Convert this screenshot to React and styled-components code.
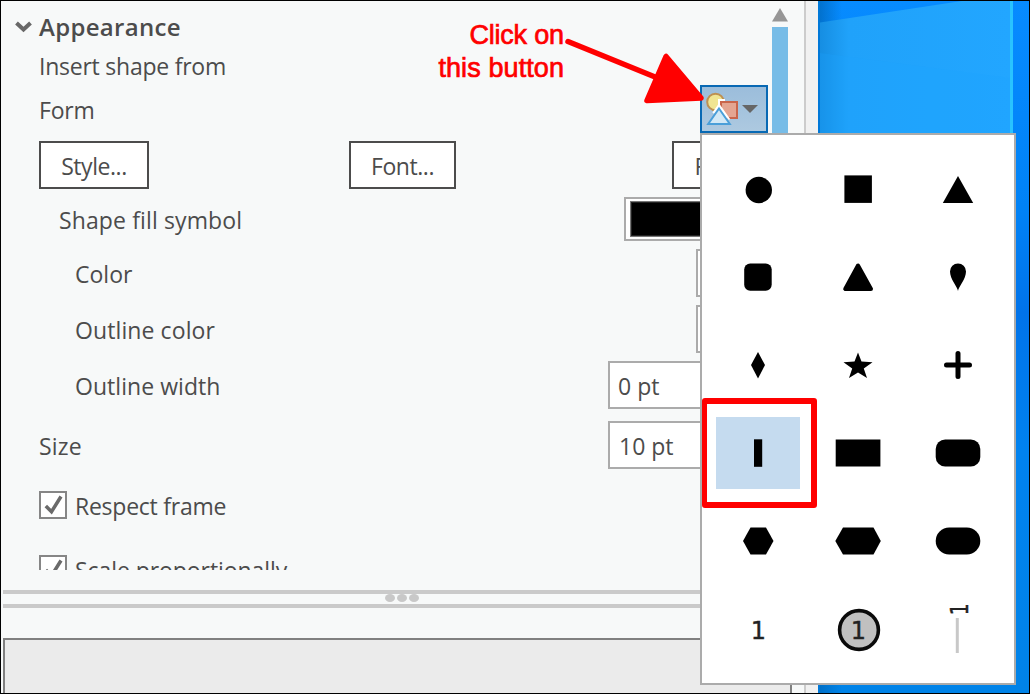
import React from "react";
import styled, { createGlobalStyle } from "styled-components";

const Global = createGlobalStyle`
  * { box-sizing: border-box; }
  body { margin: 0; overflow: hidden; }
`;

const Frame = styled.div`
  position: relative;
  display: flex;
  width: 1030px;
  height: 694px;
  border: 1px solid #000;
  overflow: hidden;
  background: #f7f9f9;
  color: #4c4c4c;
  font-family: "Open Sans", "Noto Sans", sans-serif;
  font-size: 23px;
`;

const Pane = styled.div`
  display: flex;
  flex-direction: column;
  width: 803px;
  height: 100%;
`;

const ScrollArea = styled.div`
  display: flex;
  height: 569px;
  overflow: hidden;
`;

const Properties = styled.div`
  width: 767px;
  padding-left: 38px;
`;

const Heading = styled.div`
  display: flex;
  align-items: center;
  height: 52px;
  margin-left: -24px;
  font-size: 24px;
  svg { margin-right: 7px; }
`;

const Row = styled.div`
  display: flex;
  align-items: center;
  height: ${(p) => p.$h}px;
  padding-left: ${(p) => p.$indent || 0}px;
  margin-bottom: ${(p) => p.$gap || 0}px;
`;

const Label = styled.span`
  display: block;
  flex: 1;
  line-height: 32px;
  padding-top: ${(p) => (p.$high || p.$bold ? 0 : 2)}px;
  padding-bottom: ${(p) => (p.$high ? 2 : 0)}px;
  white-space: nowrap;
  font-weight: ${(p) => (p.$bold ? 600 : 400)};
  letter-spacing: ${(p) => p.$track || 0}px;
`;

const ButtonRow = styled.div`
  display: flex;
  height: 48px;
  margin-bottom: 8px;
`;

const Button = styled.button`
  flex: none;
  width: ${(p) => p.$w}px;
  height: 48px;
  margin-right: ${(p) => p.$after || 0}px;
  padding: 2px 0 0;
  border: 2px solid #4c4c4c;
  background: #fff;
  color: inherit;
  font: inherit;
  letter-spacing: -0.45px;
`;

const Field = styled.div`
  display: flex;
  align-items: center;
  flex: none;
  width: ${(p) => p.$w}px;
  height: ${(p) => p.$h || 48}px;
  padding: ${(p) => p.$pad || "1px 8px 0"};
  border: 2px solid #ababab;
  background: #fff;
`;

const Swatch = styled.div`
  width: 100%;
  height: 100%;
  background: #000;
  border: 1px solid #777;
  box-shadow: inset 0 0 0 1px #222;
`;

const Check = styled.div`
  width: 28px;
  height: 28px;
  margin-right: 8px;
  border: 2px solid #868686;
  background: #fff;
  svg { display: block; }
`;

const Scrollbar = styled.div`
  display: flex;
  flex-direction: column;
  align-items: flex-start;
  width: 24px;
  padding: 7px 0 0 4px;
  svg { flex: none; }
`;

const Thumb = styled.div`
  width: 16px;
  height: 320px;
  margin: 5px 0 0;
  background: #77bce7;
`;

const Splitter = styled.div`
  display: flex;
  justify-content: center;
  align-items: flex-start;
  gap: 2px;
  height: 18px;
  margin: 20px 2px 0;
  padding-right: 2px;
  border-top: 4px solid #cacaca;
  border-bottom: 4px solid #cacaca;
`;

const Dot = styled.i`
  width: 10px;
  height: 8px;
  border-radius: 50%;
  background: #c8c8c8;
`;

const Preview = styled.div`
  flex: 1;
  width: 789px;
  margin: 30px 0 0 2px;
  border: 2px solid #808080;
  border-bottom: 0;
  background: #ebebeb;
`;

const Edge = styled.div`
  width: 14px;
  border-left: 2px solid #ccc;
  background: #f1f1f1;
`;

const Desktop = styled.div`
  flex: 1;
  background: #0080ed;
  svg { display: block; }
`;

const Gallery = styled.div`
  position: absolute;
  left: 699px;
  top: 132px;
  display: grid;
  grid-template-columns: repeat(3, 100px);
  grid-auto-rows: 88px;
  width: 316px;
  height: 552px;
  padding: 10px 6px;
  border: 2px solid #ababab;
  background: #fff;
`;

const Cell = styled.div`
  display: flex;
  align-items: center;
  justify-content: center;
  width: 84px;
  height: 72px;
  margin: 8px;
  background: ${(p) => (p.$selected ? "#c5dbef" : "transparent")};
`;

const ShapeButton = styled.button`
  position: absolute;
  left: 699px;
  top: 84px;
  width: 68px;
  height: 48px;
  padding: 0;
  border: 2px solid #0869b4;
  background: linear-gradient(#9bbddb, #adc9e0);
  svg { display: block; }
`;

const Marker = styled.div`
  position: absolute;
  left: 701px;
  top: 397px;
  width: 115px;
  height: 110px;
  border: 6px solid #f00;
  border-left-width: 5px;
  border-radius: 3px;
`;

const Note = styled.div`
  position: absolute;
  left: 400px;
  top: 18px;
  width: 163px;
  color: #f00;
  font: 27px/33px "Liberation Sans", Arial, sans-serif;
  text-align: right;
  -webkit-text-stroke: 0.7px #f00;
`;

const NoteLine = styled.div`
  margin-right: ${(p) => -(p.$track || 0)}px;
  letter-spacing: ${(p) => p.$track || 0}px;
`;

const Arrow = styled.svg`
  position: absolute;
  left: 559px;
  top: 29px;
`;

const CheckBox = () => (
  <Check>
    <svg width="24" height="24" viewBox="0 0 24 24">
      <path d="M4.8 13 10.5 18.700 20 3.5" fill="none" stroke="#6a6a6a" strokeWidth="3.5" />
    </svg>
  </Check>
);

const shapes = [
  <circle cx="24.8" cy="25" r="13.2" />,
  <rect x="10.4" y="10.4" width="27.5" height="27.5" />,
  <path d="M24 11 39.2 38H8.8z" />,
  <rect x="10.2" y="10.5" width="27.5" height="27.3" rx="6" />,
  <path d="M24 12.5 11.2 36H37z" stroke="#000" strokeWidth="4" strokeLinejoin="round" />,
  <path d="M24 38C23.500 34 16 26 16 18.500a8 8 0 0 1 16 0C32 26 24.500 34 24 38z" />,
  <path d="M24 11 31 24 24 37.500 17 24z" />,
  <path d="M24 11.500 27.500 20.500 38.500 21.200 29.800 27.500 33 37 24 31.500 15 37 18.200 27.500 9.500 21.200 20.500 20.500z" />,
  <path d="M24 12.500V35.500M12.500 24H35.500" stroke="#000" strokeWidth="5" strokeLinecap="round" />,
  <rect x="20" y="10.300" width="8.200" height="27.500" />,
  <rect x="1.700" y="10.500" width="44.700" height="27" />,
  <rect x="1.700" y="10.500" width="44.600" height="27" rx="9.500" />,
  <path d="M16.500 10.500H32L39.500 24 32 37.500H16.500L9 24z" />,
  <path d="M9 10.500H39.500L46.800 24 39.500 37.500H9L1.300 24z" />,
  <rect x="1.700" y="10.500" width="44.600" height="27" rx="13.500" />,
  <text x="24.500" y="34" textAnchor="middle">1</text>,
  <>
    <circle cx="25" cy="25" r="19.400" fill="#c0c0c0" stroke="#0a0a0a" strokeWidth="3.600" />
    <text x="24.500" y="34" textAnchor="middle">1</text>
  </>,
  <>
    <path d="M23.300 13V48" stroke="#c8c8c8" strokeWidth="3" />
    <text transform="translate(33.500 4.300) rotate(-90) scale(0.78 1)" textAnchor="middle">1</text>
  </>,
];

const Glyph = styled.svg`
  overflow: visible;
  text {
    font-family: "DejaVu Sans", sans-serif;
    font-size: 24px;
    fill: #222;
    stroke: #222;
    stroke-width: 0.4px;
  }
`;

export default function App() {
  return (
    <Frame>
      <Global />
      <Pane>
        <ScrollArea>
          <Properties>
            <Heading>
              <svg width="17" height="12" viewBox="0 0 17 12">
                <path d="M1.500 2 8.500 8.500 15.500 2" fill="none" stroke="#686868" strokeWidth="4" />
              </svg>
              <Label $bold $track={0.3}>Appearance</Label>
            </Heading>
            <Row $h={28}><Label $high $track={-0.24}>Insert shape from</Label></Row>
            <Row $h={60}><Label $high $track={-0.2}>Form</Label></Row>
            <ButtonRow>
              <Button $w={110} $after={200}>Style...</Button>
              <Button $w={107} $after={216}>Font...</Button>
              <Button $w={110}>Field...</Button>
            </ButtonRow>
            <Row $h={44} $indent={20} $gap={8}>
              <Label $track={0.12}>Shape fill symbol</Label>
              <Field $w={144} $h={44} $pad="2px 3px 2px 4px"><Swatch /></Field>
            </Row>
            <Row $h={48} $indent={36} $gap={8}><Label>Color</Label><Field $w={72} /></Row>
            <Row $h={48} $indent={36} $gap={8}><Label $track={0.1}>Outline color</Label><Field $w={72} /></Row>
            <Row $h={48} $indent={36} $gap={12}>
              <Label $track={0.05}>Outline width</Label><Field $w={160}>0 pt</Field>
            </Row>
            <Row $h={48} $gap={22}>
              <Label $track={0.2}>Size</Label><Field $w={160} $pad="1px 9px 0">10 pt</Field>
            </Row>
            <Row $h={28} $gap={36}><CheckBox /><Label $track={-0.25}>Respect frame</Label></Row>
            <Row $h={28}><CheckBox /><Label $track={-0.07}>Scale proportionally</Label></Row>
          </Properties>
          <Scrollbar>
            <svg width="16" height="14" viewBox="0 0 16 14"><path d="M8 0 16 13.500H0z" fill="#969696" /></svg>
            <Thumb />
          </Scrollbar>
        </ScrollArea>
        <Splitter><Dot /><Dot /><Dot /></Splitter>
        <Preview />
      </Pane>
      <Edge />
      <Desktop>
        <svg width="211" height="692" viewBox="818 1 211 692">
          <defs>
            <linearGradient id="beam" x1="0" x2="1">
              <stop offset="0" stopColor="#168ee2" />
              <stop offset="0.150" stopColor="#20a2fa" />
              <stop offset="1" stopColor="#22a6ff" />
            </linearGradient>
            <linearGradient id="side" x1="0" x2="0" y1="0" y2="1">
              <stop offset="0" stopColor="#078bff" />
              <stop offset="0.300" stopColor="#0082f6" />
              <stop offset="0.450" stopColor="#0073ea" />
              <stop offset="0.650" stopColor="#0082ef" />
              <stop offset="1" stopColor="#0083e8" />
            </linearGradient>
            <linearGradient id="shade" x1="0" x2="1">
              <stop offset="0" stopColor="#0069bd" stopOpacity="0.800" />
              <stop offset="1" stopColor="#0069bd" stopOpacity="0" />
            </linearGradient>
          </defs>
          <rect x="818" y="1" width="211" height="692" fill="url(#side)" />
          <rect x="818" y="1" width="24" height="692" fill="url(#shade)" />
          <path d="M820 22.500 962 1H1011V300H820z" fill="url(#beam)" />
          <path d="M820 53 1010 78V300H820z" fill="#1da2ff" opacity="0.250" />
          <rect x="1010" y="1" width="3" height="300" fill="#29c3ff" />
          <rect x="818" y="1" width="2" height="692" fill="#0078d8" />
        </svg>
      </Desktop>
      <Gallery>
        {shapes.map((shape, i) => (
          <Cell key={i} $selected={i === 9}>
            <Glyph width="48" height="48" viewBox="0 0 48 48">{shape}</Glyph>
          </Cell>
        ))}
      </Gallery>
      <ShapeButton aria-label="Form shape">
        <svg width="64" height="44" viewBox="702 87 64 44">
          <circle cx="715.500" cy="102" r="8.300" fill="#f0e592" stroke="#bd9052" strokeWidth="2" />
          <path d="M719 107V100H725" fill="none" stroke="#fff" strokeWidth="2" />
          <rect x="721" y="102" width="16" height="16" fill="#e4a591" stroke="#c9654b" strokeWidth="2" />
          <path d="M713 113 719 104.500 729.500 119.500" fill="#fff" stroke="#fff" strokeWidth="1.500" />
          <path d="M719 108.500 729.800 124H708.200z" fill="#d3e9f6" stroke="#4a9fd9" strokeWidth="2" />
          <path d="M742 105H758L750 113z" fill="#666" />
        </svg>
      </ShapeButton>
      <Marker />
      <Note>
        <NoteLine $track={-0.2}>Click on</NoteLine>
        <NoteLine $track={0.1}>this button</NoteLine>
      </Note>
      <Arrow width="150" height="80" viewBox="560 30 150 80">
        <path d="M568 41.500 660 79" stroke="#f00" strokeWidth="5.500" strokeLinecap="round" />
        <path d="M666 56.500 647 100.500 701 98z" fill="#f00" stroke="#f00" strokeWidth="5.500" strokeLinejoin="round" />
      </Arrow>
    </Frame>
  );
}
